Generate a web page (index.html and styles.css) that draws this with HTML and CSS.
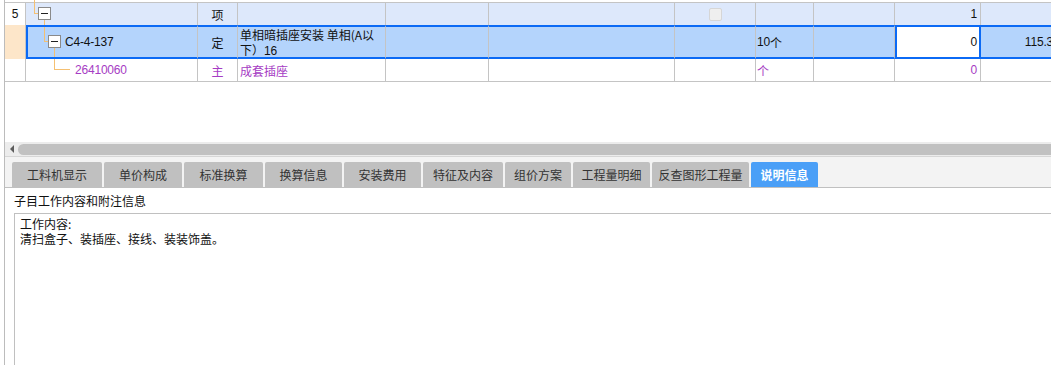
FILE: index.html
```html
<!DOCTYPE html>
<html lang="zh-CN">
<head>
  <meta charset="UTF-8" />
  <title>说明信息</title>
  <link rel="stylesheet" href="styles.css">
</head>
<body>
  <div class="app">
    <div class="grid">
      <svg class="tree-lines" width="90" height="82" viewBox="0 0 90 82">
        <g stroke="#f5c072" fill="none" shape-rendering="crispEdges">
          <path d="M8.5 0V13.5H12" />
          <path d="M18.5 20V25M18.5 27V41.5H22" />
          <path d="M28.5 48V57M28.5 59V69.5H44" />
        </g>
        <g shape-rendering="crispEdges">
          <rect x="12.5" y="7.5" width="12" height="12" fill="#fff" stroke="#8a8a8a" />
          <path d="M15 13.5H22" stroke="#222" />
          <rect x="22.5" y="35.5" width="12" height="12" fill="#fff" stroke="#8a8a8a" />
          <path d="M25 41.5H32" stroke="#222" />
        </g>
      </svg>

      <div class="row row-parent">
        <div class="cell num"><span class="n">5</span></div>
        <div class="cell tree"></div>
        <div class="cell type">项</div>
        <div class="cell name"></div>
        <div class="cell"></div>
        <div class="cell"></div>
        <div class="cell check"><span class="checkbox"></span></div>
        <div class="cell"></div>
        <div class="cell"></div>
        <div class="cell qty"><span class="n">1</span></div>
        <div class="cell qty"></div>
      </div>

      <div class="row row-current">
        <div class="cell num"></div>
        <div class="cell tree code-c4"><span class="n">C4-4-137</span></div>
        <div class="cell type">定</div>
        <div class="cell name">单相暗插座安装 单相(A以<br>下）<span class="n">16</span></div>
        <div class="cell"></div>
        <div class="cell"></div>
        <div class="cell"></div>
        <div class="cell unit"><span class="n">10</span>个</div>
        <div class="cell"></div>
        <div class="cell qty edit"><span class="n">0</span></div>
        <div class="cell qty"><span class="n">115.3</span></div>
      </div>

      <div class="row row-child">
        <div class="cell num"></div>
        <div class="cell tree code-main"><span class="n">26410060</span></div>
        <div class="cell type">主</div>
        <div class="cell name">成套插座</div>
        <div class="cell"></div>
        <div class="cell"></div>
        <div class="cell"></div>
        <div class="cell unit">个</div>
        <div class="cell"></div>
        <div class="cell qty"><span class="n">0</span></div>
        <div class="cell qty"></div>
      </div>
    </div>

    <div class="hscroll">
      <span class="arrow"></span>
      <span class="thumb"></span>
    </div>

    <div class="tabs">
      <div class="tab">工料机显示</div>
      <div class="tab">单价构成</div>
      <div class="tab">标准换算</div>
      <div class="tab">换算信息</div>
      <div class="tab">安装费用</div>
      <div class="tab">特征及内容</div>
      <div class="tab">组价方案</div>
      <div class="tab">工程量明细</div>
      <div class="tab">反查图形工程量</div>
      <div class="tab active">说明信息</div>
    </div>

    <div class="note-label">子目工作内容和附注信息</div>
    <div class="note-box">工作内容:<br>清扫盒子、装插座、接线、装装饰盖。</div>
  </div>
</body>
</html>
```

FILE: styles.css
```css
body { margin: 0; overflow: hidden; background: #fff; font: 12px "Noto Sans CJK SC", sans-serif; color: #111; }
.app { margin-left: 4px; padding-top: 2px; border-left: 1px solid #bcbcbc; height: 365px; box-sizing: border-box; overflow: hidden; }

/* grid */
.grid { position: relative; height: 140px; border-top: 1px solid #c4c4c4; box-sizing: border-box; }
.tree-lines { position: absolute; left: 21px; top: -3px; }
.row { display: grid; grid-template-columns: 21px 172px 40px 148px 103px 186px 81px 58px 81px 86px 76px; }
.cell { box-sizing: border-box; border-right: 1px solid #c4c4c4; padding: 0 2px; display: flex; align-items: center; overflow: hidden; white-space: nowrap; }
.n { font-family: "Liberation Sans", sans-serif; letter-spacing: -0.2px; }
.num, .type, .check { justify-content: center; }
.qty { justify-content: flex-end; padding-right: 3px; }
.unit { padding-left: 1px; }
.num { background: #fff; }

.row-parent { height: 22px; background: #dde8fb; }

.row-current { height: 34px; background: #b4d4fc; }
.row-current .cell { border-top: 2px solid #0b6af5; border-bottom: 2px solid #0b6af5; }
.row-current .num { border-top: 0; border-bottom: 0; background: #fde6c9; }
.row-current .tree { box-shadow: inset 2px 0 0 #0b6af5; }
.row-current .name { display: block; white-space: normal; line-height: 15px; padding: 0 0 0 2px; }
.row-current .edit { background: #fff; border-right-color: #0b6af5; box-shadow: inset 2px 0 0 #0b6af5, inset -1px 0 0 #0b6af5; padding-right: 3px; }

.row-child { height: 23px; }
.row-child .cell { border-bottom: 1px solid #c4c4c4; }
.row-child .tree, .row-child .type, .row-child .name, .row-child .unit, .row-child .qty { color: #a63cc4; }

.code-c4 { padding-left: 39px; }
.code-main { padding-left: 49px; }

.checkbox { width: 13px; height: 13px; box-sizing: border-box; border: 1px solid #d6d6d6; border-radius: 2px; background: #efefef; }

/* scrollbar */
.hscroll { height: 15px; box-sizing: border-box; background: #ececec; border-bottom: 1px solid #d6d6d6; display: flex; align-items: center; padding-left: 5px; }
.arrow { width: 0; height: 0; border-right: 4px solid #5c5c5c; border-top: 4px solid transparent; border-bottom: 4px solid transparent; }
.thumb { flex: 1; height: 11px; margin-left: 4px; border-radius: 6px 0 0 6px; background: #c1c1c1; }

/* tabs */
.tabs { display: grid; grid-template-columns: 90px 78px 79px 77px 77px 80px 66px 77px 97px 67px; column-gap: 2px; height: 31px; box-sizing: border-box; padding: 5px 0 0 7px; background: #f3f3f3; border-bottom: 1px solid #c0c0c0; }
.tab { background: #c0c0c0; border-radius: 2px 2px 0 0; text-align: center; line-height: 25px; color: #333; }
.tab.active { background: #4a9ff7; color: #fff; font-weight: bold; }

/* notes */
.note-label { height: 25px; line-height: 25px; padding-left: 9px; }
.note-box { margin-left: 9px; height: 160px; border-top: 1px solid #c0c0c0; border-left: 1px solid #c0c0c0; padding: 2px 0 0 5px; line-height: 15px; }
```
